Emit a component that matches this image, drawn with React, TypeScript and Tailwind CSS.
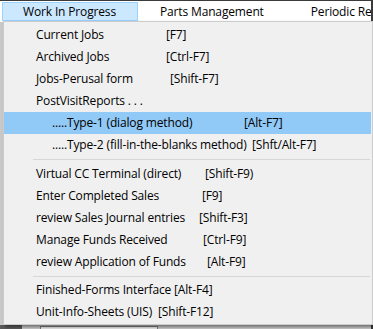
const items: ({ label: string; key: string; at: number; hot?: boolean; indent?: boolean } | 'sep6' | 'sep7')[] = [
  { label: 'Current Jobs', key: '[F7]', at: 166 },
  { label: 'Archived Jobs', key: '[Ctrl-F7]', at: 166 },
  { label: 'Jobs-Perusal form', key: '[Shift-F7]', at: 170 },
  { label: 'PostVisitReports . . .', key: '', at: 0 },
  { label: '.....Type-1 (dialog method)', key: '[Alt-F7]', at: 244, hot: true, indent: true },
  { label: '.....Type-2 (fill-in-the-blanks method)', key: '[Shft/Alt-F7]', at: 252, indent: true },
  'sep7',
  { label: 'Virtual CC Terminal (direct)', key: '[Shift-F9)', at: 205 },
  { label: 'Enter Completed Sales', key: '[F9]', at: 202 },
  { label: 'review Sales Journal entries', key: '[Shift-F3]', at: 199 },
  { label: 'Manage Funds Received', key: '[Ctrl-F9]', at: 203 },
  { label: 'review Application of Funds', key: '[Alt-F9]', at: 207 },
  'sep6',
  { label: 'Finished-Forms Interface', key: '[Alt-F4]', at: 174 },
  { label: 'Unit-Info-Sheets (UIS)', key: '[Shift-F12]', at: 158 },
]

export default function App() {
  return (
    <div
      className="relative w-[373px] h-[329px] overflow-hidden bg-[#3a3a3a] text-[12px] tracking-[-0.15px] text-black"
      style={{ fontFamily: '"Open Sans", "Noto Sans", sans-serif' }}
    >
      {/* Window area */}
      <div className="mt-[1px] w-[371px] h-[328px] flex flex-col bg-[#d9d9d9]">
        {/* Menu bar */}
        <div className="h-[21px] bg-white flex items-stretch pl-[2px] pt-[1px] whitespace-nowrap overflow-hidden">
          <div className="w-[136px] shrink-0 h-[19px] flex items-center pl-[20px] bg-[#cce8ff] border border-[#99d1ff]">
            Work In Progress
          </div>
          <div className="shrink-0 h-[19px] flex items-center pl-[22px]">Parts Management</div>
          <div className="shrink-0 h-[19px] flex items-center pl-[47px]">Periodic Reports</div>
        </div>
        {/* Window content behind the menu */}
        <div className="flex-1 relative bg-[#c9c9c9]">
          <div className="absolute left-0 top-[303px] w-[22px] h-[6px] bg-[#5a5a5a]" />
          <div className="absolute left-[40px] top-[304px] h-[12px] px-[8px] border border-[#7a7a7a] bg-[#e8e8e8] text-[11px] leading-[12px] whitespace-nowrap">
            working in Schedule
          </div>
        </div>
      </div>

      {/* Dropdown */}
      <div className="absolute left-[3px] top-[21px] w-[370px] h-[304px] bg-[#f0f0f0] border border-[#cccccc] shadow-[2px_2px_3px_rgba(0,0,0,0.45)] pt-[2px]">
        {items.map((it, i) => {
          if (it === 'sep7' || it === 'sep6') {
            return (
              <div key={i} className={it === 'sep7' ? 'h-[7px] pt-[3px]' : 'h-[6px] pt-[3px]'}>
                <div className="ml-[29px] mr-[2px] h-px bg-[#d7d7d7]" />
              </div>
            )
          }
          return (
            <div
              key={i}
              className={`h-[22px] mr-[1px] flex items-center whitespace-nowrap ${it.hot ? 'bg-[#91c9f7]' : ''}`}
            >
              <span
                className="inline-block shrink-0"
                style={{ marginLeft: it.indent ? 48 : 32, width: it.key ? it.at - (it.indent ? 52 : 36) : undefined }}
              >
                {it.label}
              </span>
              {it.key && <span>{it.key}</span>}
            </div>
          )
        })}
      </div>
    </div>
  )
}
